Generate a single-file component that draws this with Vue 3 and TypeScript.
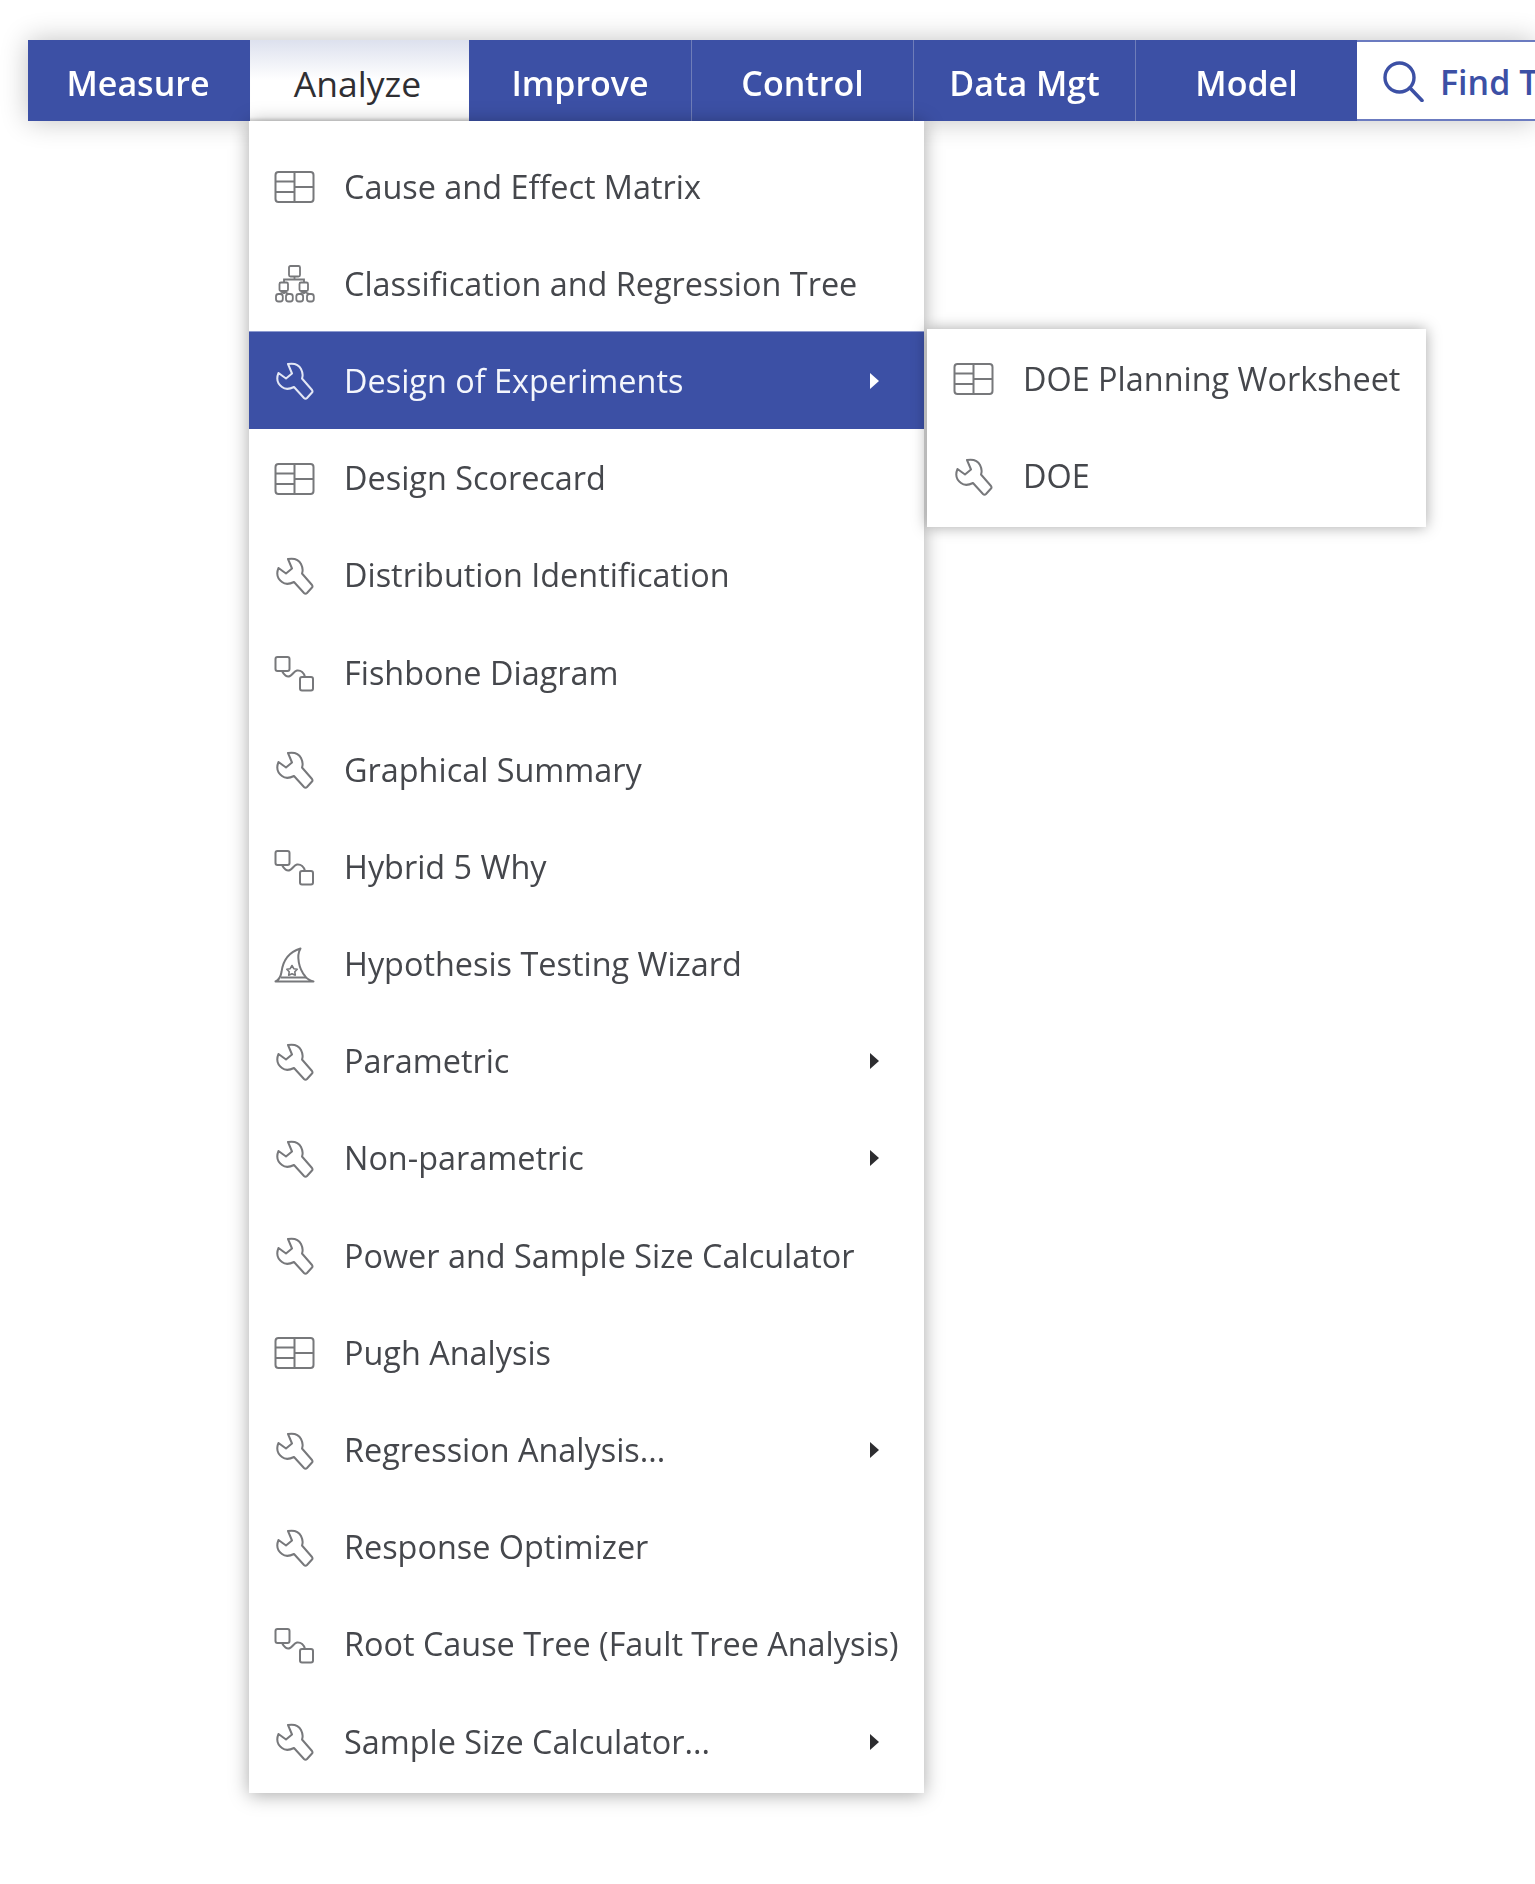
<script setup lang="ts">
type Item = { label: string; icon: string; arrow?: boolean; active?: boolean };
const tabs = ['Measure', 'Analyze', 'Improve', 'Control', 'Data Mgt', 'Model'];
const items: Item[] = [
  { label: 'Cause and Effect Matrix', icon: 'table' },
  { label: 'Classification and Regression Tree', icon: 'tree' },
  { label: 'Design of Experiments', icon: 'wrench', arrow: true, active: true },
  { label: 'Design Scorecard', icon: 'table' },
  { label: 'Distribution Identification', icon: 'wrench' },
  { label: 'Fishbone Diagram', icon: 'flow' },
  { label: 'Graphical Summary', icon: 'wrench' },
  { label: 'Hybrid 5 Why', icon: 'flow' },
  { label: 'Hypothesis Testing Wizard', icon: 'wizard' },
  { label: 'Parametric', icon: 'wrench', arrow: true },
  { label: 'Non-parametric', icon: 'wrench', arrow: true },
  { label: 'Power and Sample Size Calculator', icon: 'wrench' },
  { label: 'Pugh Analysis', icon: 'table' },
  { label: 'Regression Analysis...', icon: 'wrench', arrow: true },
  { label: 'Response Optimizer', icon: 'wrench' },
  { label: 'Root Cause Tree (Fault Tree Analysis)', icon: 'flow' },
  { label: 'Sample Size Calculator...', icon: 'wrench', arrow: true },
];
const subItems: Item[] = [
  { label: 'DOE Planning Worksheet', icon: 'table' },
  { label: 'DOE', icon: 'wrench' },
];
</script>

<template>
  <div class="page">
    <svg class="sprite" aria-hidden="true">
      <symbol id="i-table" viewBox="0 0 41 41">
        <g fill="none" stroke="currentColor" stroke-width="2">
          <rect x="1.500" y="7" width="38" height="30" rx="3" />
          <path d="M20.500 7v30M1.500 16.500h19M1.500 27h19M20.500 22h19" />
        </g>
      </symbol>
      <symbol id="i-tree" viewBox="0 0 41 41">
        <g fill="none" stroke="currentColor" stroke-width="1.800">
          <rect x="15" y="4" width="11" height="10.500" rx="1.500" />
          <rect x="5.500" y="20.500" width="8.500" height="8.500" rx="1.500" />
          <rect x="25.500" y="20.500" width="8.500" height="8.500" rx="1.500" />
          <path d="M20.500 14.500v3M10 20.500v-3h20v3M10 29v3M30 29v3M5.500 32l4.500-2 5 2M25.500 32l4.500-2 5.500 2" />
          <rect x="2" y="32" width="6.800" height="7.500" rx="2.500" />
          <rect x="12" y="32" width="6.800" height="7.500" rx="2.500" />
          <rect x="22.300" y="32" width="6.800" height="7.500" rx="2.500" />
          <rect x="33" y="32" width="6.800" height="7.500" rx="2.500" />
        </g>
      </symbol>
      <symbol id="i-wrench" viewBox="0 0 41 41">
        <path fill="none" stroke="currentColor" stroke-width="2" stroke-linejoin="round"
          d="M14 5 C20 4 25 6 27 10 C29 14 29 17 28 19.500 L38 31 Q39 32.500 38 33.500 L33 39 Q31.500 40.500 30 39 L20 28 C16 30 11 30.500 8 28 C4 25 2 20 4.500 14 L12 19.500 L18 14.500 Z" />
      </symbol>
      <symbol id="i-flow" viewBox="0 0 41 41">
        <g fill="none" stroke="currentColor" stroke-width="2">
          <rect x="1.500" y="6" width="14" height="14" rx="2" />
          <rect x="26" y="26" width="13" height="13.500" rx="2" />
          <path d="M8 20 C10 24 13 26.500 16 25 C18.500 24 20 20 23 19.500 C27 19 30 22 31 26" />
        </g>
      </symbol>
      <symbol id="i-wizard" viewBox="0 0 41 41">
        <g fill="none" stroke="currentColor" stroke-width="2" stroke-linejoin="round">
          <path d="M1.500 38.500 C5 37 6.500 35 7.500 29 C9 17 15 9 26.500 5.500 C22 13 25 26 31 33 C33 36 36 37.500 39.500 38.500 Z" />
          <path d="M7 34.500h25" />
          <path d="M18 22.500l1.800 3.200 3.400.6-2.400 2.500.5 3.400-3.300-1.500-3.300 1.500.5-3.400-2.400-2.500 3.400-.6z" stroke-width="1.600" />
        </g>
      </symbol>
    </svg>

    <nav class="bar">
      <div class="tab-list">
        <div v-for="tab in tabs" :key="tab" class="tab" :class="{ 'tab-open': tab === 'Analyze' }">
          <span class="tab-text">{{ tab }}</span>
          <div v-if="tab === 'Analyze'" class="menu">
            <div v-for="item in items" :key="item.label" class="row" :class="{ 'row-active': item.active }">
              <svg class="ico"><use :href="'#i-' + item.icon" /></svg>
              <span class="label">{{ item.label }}</span>
              <span v-if="item.arrow" class="caret"></span>
              <div v-if="item.active" class="submenu">
                <div v-for="sub in subItems" :key="sub.label" class="row">
                  <svg class="ico"><use :href="'#i-' + sub.icon" /></svg>
                  <span class="label">{{ sub.label }}</span>
                </div>
              </div>
            </div>
          </div>
        </div>
      </div>
      <div class="search">
        <svg class="search-ico" viewBox="0 0 42 42">
          <circle cx="17.500" cy="17.500" r="14.500" fill="none" stroke="currentColor" stroke-width="3.400" />
          <path d="M28 28l12 12.500" fill="none" stroke="currentColor" stroke-width="3.600" stroke-linecap="round" />
        </svg>
        <span class="find">Find Tools</span>
      </div>
    </nav>
  </div>
</template>

<style>
html, body { margin: 0; background: #fff; }
</style>

<style scoped>
.page {
  width: 1535px;
  height: 1884px;
  overflow: hidden;
  box-sizing: border-box;
  padding: 40px 0 0 28px;
  font-family: "Open Sans", "Noto Sans", sans-serif;
  filter: blur(0.7px);
}
.sprite { position: absolute; width: 0; height: 0; }
.bar {
  display: flex;
  height: 81px;
  width: 1507px;
  background: #3c50a5;
  box-shadow: 0 0 26px rgba(0, 0, 0, 0.24);
}
.tab-list { display: flex; }
.tab {
  position: relative;
  width: 222px;
  box-sizing: border-box;
  display: flex;
  align-items: center;
  justify-content: center;
  padding-top: 5px;
  font-size: 34px;
  font-weight: 600;
  color: #fff;
  border-left: 1px solid #6f7db9;
}
.tab:first-child { border-left: 0; padding-right: 2px; }
.tab-open {
  width: 219px;
  border-left: 0;
  padding-right: 4px;
  color: #2f2f33;
  font-size: 35.500px;
  font-weight: 400;
  background: linear-gradient(#dde1ee 0, #fff 50%);
  box-shadow: inset 0 -4px 3px -2px #d8d8d8;
}
.tab-open + .tab { border-left: 0; }
.menu {
  position: absolute;
  left: -1px;
  top: 81px;
  width: 675px;
  box-sizing: border-box;
  padding: 16px 0 4px;
  background: #fff;
  box-shadow: 0 2px 18px rgba(0, 0, 0, 0.34);
  z-index: 2;
}
.row {
  position: relative;
  display: flex;
  align-items: center;
  height: 97.200px;
  padding-left: 25px;
  font-size: 32.400px;
  font-weight: 400;
  color: #45474c;
}
.ico { width: 41px; height: 41px; flex: none; color: #77787b; }
.label { margin-left: 29px; white-space: nowrap; }
.row-active {
  background: #3c50a5;
  color: #f4f6fc;
  box-shadow: inset 0 1px 0 #8d9ad0;
}
.row-active > .ico { color: #e3e7f5; }
.caret {
  position: absolute;
  left: 621px;
  top: 50%;
  margin-top: -7px;
  border-left: 9px solid #2d2d30;
  border-top: 8px solid transparent;
  border-bottom: 8px solid transparent;
}
.row-active .caret { border-left-color: #fff; }
.submenu {
  position: absolute;
  left: 678px;
  top: -2px;
  width: 499px;
  padding: 0 0 3px;
  background: #fff;
  box-shadow: 0 0 14px rgba(0, 0, 0, 0.35);
}
.submenu .row { padding-left: 26px; color: #45474c; }
.submenu .ico { color: #77787b; }
.search {
  flex: 1;
  min-width: 0;
  display: flex;
  align-items: center;
  box-sizing: border-box;
  border-top: 2px solid #6b7bc0;
  border-bottom: 2px solid #6b7bc0;
  padding-left: 25px;
  background: #fff;
  overflow: hidden;
  color: #3c50a5;
}
.search-ico { width: 42px; height: 42px; flex: none; }
.find {
  margin-left: 16px;
  padding-top: 3px;
  font-size: 34px;
  font-weight: 600;
  white-space: nowrap;
}
</style>
